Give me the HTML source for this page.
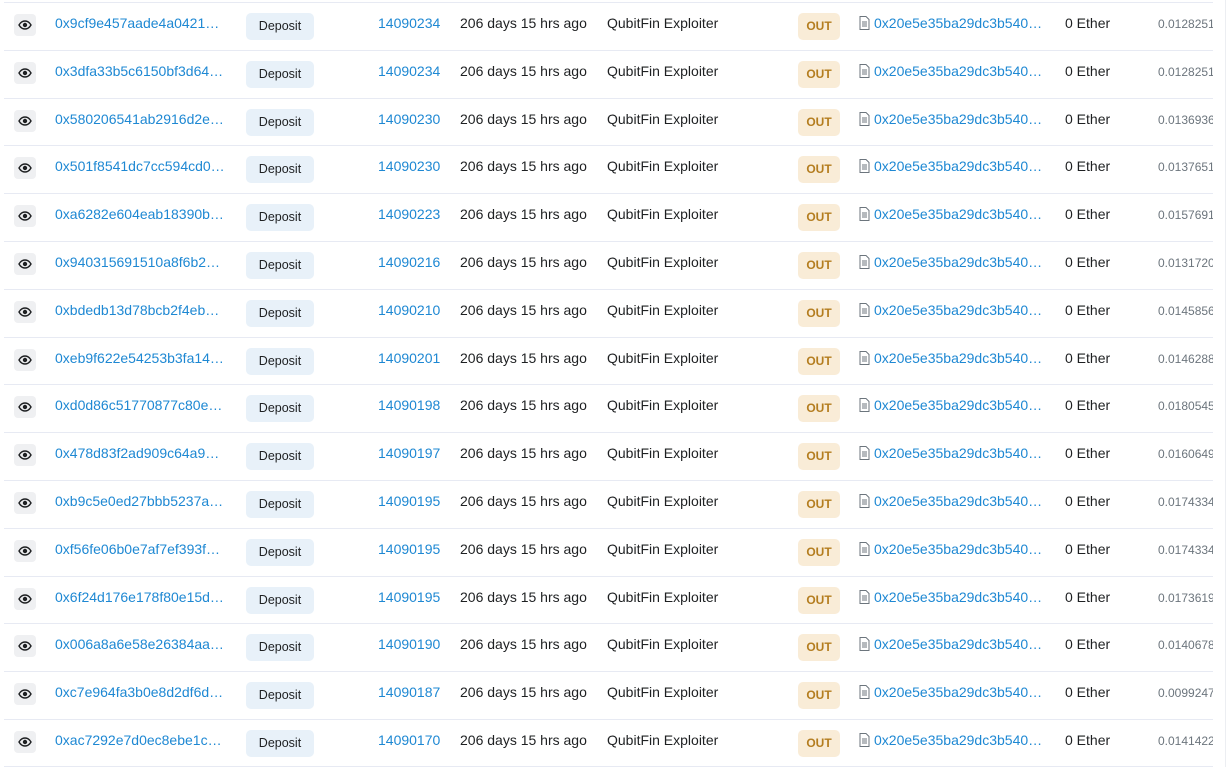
<!DOCTYPE html>
<html><head><meta charset="utf-8"><style>
*{margin:0;padding:0;box-sizing:border-box}
html,body{width:1227px;height:767px;overflow:hidden}
body{background:#fff;font-family:"Liberation Sans",Arial,sans-serif;font-size:14px;color:#1e2022;position:relative}
.r{position:absolute;left:4px;width:1209px;height:48px;border-top:1px solid #e7eaf3;overflow:hidden}
.r.end{height:1px}
.r>*{position:absolute;white-space:nowrap}
.eye{left:10px;top:11px;width:22px;height:22px;background:#eff0f2;border-radius:4px;display:flex;align-items:center;justify-content:center}
.h{left:51px;top:12px;color:#1e88d3}
.dep{left:242px;top:10px;width:68px;height:27px;background:#e8f1f9;border-radius:5px;font-size:12.5px;text-align:center;line-height:27px;color:#1e2022}
.b{left:374px;top:12px;color:#1e88d3}
.a{left:456px;top:12px}
.f{left:603px;top:12px}
.out{left:794px;top:10px;width:42px;height:27px;background:#f9ecd7;border-radius:5px;color:#b47d1f;font-weight:bold;font-size:12px;text-align:center;line-height:27px}
.doc{left:855px;top:13px}
.t{left:870px;top:12px;color:#1e88d3}
.e{left:1061px;top:12px}
.v{left:1154px;top:14px;font-size:12px;color:#6c757d}
.sb{position:absolute;left:1225px;top:0;width:1px;height:767px;background:#eceef2}
</style></head><body>
<div class="sb"></div>
<div class="r" style="top:2px"><div class="eye"><svg width="14" height="10" viewBox="0 0 14 10"><path d="M1 5C3 1.5 5 1 7 1s4 .5 6 4c-2 3.5-4 4-6 4S3 8.5 1 5z" fill="none" stroke="#1e2022" stroke-width="1.4"/><circle cx="7" cy="5" r="2.2" fill="#1e2022"/></svg></div><span class="h">0x9cf9e457aade4a0421…</span><div class="dep">Deposit</div><span class="b">14090234</span><span class="a">206 days 15 hrs ago</span><span class="f">QubitFin Exploiter</span><div class="out">OUT</div><span class="doc"><svg width="11" height="14" viewBox="0 0 11 14"><path d="M1 .5h6l3 3v10H1z" fill="none" stroke="#6c757d"/><path d="M3 6h5M3 8h5M3 10h5" stroke="#6c757d"/></svg></span><span class="t">0x20e5e35ba29dc3b540…</span><span class="e">0 Ether</span><span class="v">0.0128251</span></div>
<div class="r" style="top:50px"><div class="eye"><svg width="14" height="10" viewBox="0 0 14 10"><path d="M1 5C3 1.5 5 1 7 1s4 .5 6 4c-2 3.5-4 4-6 4S3 8.5 1 5z" fill="none" stroke="#1e2022" stroke-width="1.4"/><circle cx="7" cy="5" r="2.2" fill="#1e2022"/></svg></div><span class="h">0x3dfa33b5c6150bf3d64…</span><div class="dep">Deposit</div><span class="b">14090234</span><span class="a">206 days 15 hrs ago</span><span class="f">QubitFin Exploiter</span><div class="out">OUT</div><span class="doc"><svg width="11" height="14" viewBox="0 0 11 14"><path d="M1 .5h6l3 3v10H1z" fill="none" stroke="#6c757d"/><path d="M3 6h5M3 8h5M3 10h5" stroke="#6c757d"/></svg></span><span class="t">0x20e5e35ba29dc3b540…</span><span class="e">0 Ether</span><span class="v">0.0128251</span></div>
<div class="r" style="top:98px"><div class="eye"><svg width="14" height="10" viewBox="0 0 14 10"><path d="M1 5C3 1.5 5 1 7 1s4 .5 6 4c-2 3.5-4 4-6 4S3 8.5 1 5z" fill="none" stroke="#1e2022" stroke-width="1.4"/><circle cx="7" cy="5" r="2.2" fill="#1e2022"/></svg></div><span class="h">0x580206541ab2916d2e…</span><div class="dep">Deposit</div><span class="b">14090230</span><span class="a">206 days 15 hrs ago</span><span class="f">QubitFin Exploiter</span><div class="out">OUT</div><span class="doc"><svg width="11" height="14" viewBox="0 0 11 14"><path d="M1 .5h6l3 3v10H1z" fill="none" stroke="#6c757d"/><path d="M3 6h5M3 8h5M3 10h5" stroke="#6c757d"/></svg></span><span class="t">0x20e5e35ba29dc3b540…</span><span class="e">0 Ether</span><span class="v">0.0136936</span></div>
<div class="r" style="top:145px"><div class="eye"><svg width="14" height="10" viewBox="0 0 14 10"><path d="M1 5C3 1.5 5 1 7 1s4 .5 6 4c-2 3.5-4 4-6 4S3 8.5 1 5z" fill="none" stroke="#1e2022" stroke-width="1.4"/><circle cx="7" cy="5" r="2.2" fill="#1e2022"/></svg></div><span class="h">0x501f8541dc7cc594cd0…</span><div class="dep">Deposit</div><span class="b">14090230</span><span class="a">206 days 15 hrs ago</span><span class="f">QubitFin Exploiter</span><div class="out">OUT</div><span class="doc"><svg width="11" height="14" viewBox="0 0 11 14"><path d="M1 .5h6l3 3v10H1z" fill="none" stroke="#6c757d"/><path d="M3 6h5M3 8h5M3 10h5" stroke="#6c757d"/></svg></span><span class="t">0x20e5e35ba29dc3b540…</span><span class="e">0 Ether</span><span class="v">0.0137651</span></div>
<div class="r" style="top:193px"><div class="eye"><svg width="14" height="10" viewBox="0 0 14 10"><path d="M1 5C3 1.5 5 1 7 1s4 .5 6 4c-2 3.5-4 4-6 4S3 8.5 1 5z" fill="none" stroke="#1e2022" stroke-width="1.4"/><circle cx="7" cy="5" r="2.2" fill="#1e2022"/></svg></div><span class="h">0xa6282e604eab18390b…</span><div class="dep">Deposit</div><span class="b">14090223</span><span class="a">206 days 15 hrs ago</span><span class="f">QubitFin Exploiter</span><div class="out">OUT</div><span class="doc"><svg width="11" height="14" viewBox="0 0 11 14"><path d="M1 .5h6l3 3v10H1z" fill="none" stroke="#6c757d"/><path d="M3 6h5M3 8h5M3 10h5" stroke="#6c757d"/></svg></span><span class="t">0x20e5e35ba29dc3b540…</span><span class="e">0 Ether</span><span class="v">0.0157691</span></div>
<div class="r" style="top:241px"><div class="eye"><svg width="14" height="10" viewBox="0 0 14 10"><path d="M1 5C3 1.5 5 1 7 1s4 .5 6 4c-2 3.5-4 4-6 4S3 8.5 1 5z" fill="none" stroke="#1e2022" stroke-width="1.4"/><circle cx="7" cy="5" r="2.2" fill="#1e2022"/></svg></div><span class="h">0x940315691510a8f6b2…</span><div class="dep">Deposit</div><span class="b">14090216</span><span class="a">206 days 15 hrs ago</span><span class="f">QubitFin Exploiter</span><div class="out">OUT</div><span class="doc"><svg width="11" height="14" viewBox="0 0 11 14"><path d="M1 .5h6l3 3v10H1z" fill="none" stroke="#6c757d"/><path d="M3 6h5M3 8h5M3 10h5" stroke="#6c757d"/></svg></span><span class="t">0x20e5e35ba29dc3b540…</span><span class="e">0 Ether</span><span class="v">0.0131720</span></div>
<div class="r" style="top:289px"><div class="eye"><svg width="14" height="10" viewBox="0 0 14 10"><path d="M1 5C3 1.5 5 1 7 1s4 .5 6 4c-2 3.5-4 4-6 4S3 8.5 1 5z" fill="none" stroke="#1e2022" stroke-width="1.4"/><circle cx="7" cy="5" r="2.2" fill="#1e2022"/></svg></div><span class="h">0xbdedb13d78bcb2f4eb…</span><div class="dep">Deposit</div><span class="b">14090210</span><span class="a">206 days 15 hrs ago</span><span class="f">QubitFin Exploiter</span><div class="out">OUT</div><span class="doc"><svg width="11" height="14" viewBox="0 0 11 14"><path d="M1 .5h6l3 3v10H1z" fill="none" stroke="#6c757d"/><path d="M3 6h5M3 8h5M3 10h5" stroke="#6c757d"/></svg></span><span class="t">0x20e5e35ba29dc3b540…</span><span class="e">0 Ether</span><span class="v">0.0145856</span></div>
<div class="r" style="top:337px"><div class="eye"><svg width="14" height="10" viewBox="0 0 14 10"><path d="M1 5C3 1.5 5 1 7 1s4 .5 6 4c-2 3.5-4 4-6 4S3 8.5 1 5z" fill="none" stroke="#1e2022" stroke-width="1.4"/><circle cx="7" cy="5" r="2.2" fill="#1e2022"/></svg></div><span class="h">0xeb9f622e54253b3fa14…</span><div class="dep">Deposit</div><span class="b">14090201</span><span class="a">206 days 15 hrs ago</span><span class="f">QubitFin Exploiter</span><div class="out">OUT</div><span class="doc"><svg width="11" height="14" viewBox="0 0 11 14"><path d="M1 .5h6l3 3v10H1z" fill="none" stroke="#6c757d"/><path d="M3 6h5M3 8h5M3 10h5" stroke="#6c757d"/></svg></span><span class="t">0x20e5e35ba29dc3b540…</span><span class="e">0 Ether</span><span class="v">0.0146288</span></div>
<div class="r" style="top:384px"><div class="eye"><svg width="14" height="10" viewBox="0 0 14 10"><path d="M1 5C3 1.5 5 1 7 1s4 .5 6 4c-2 3.5-4 4-6 4S3 8.5 1 5z" fill="none" stroke="#1e2022" stroke-width="1.4"/><circle cx="7" cy="5" r="2.2" fill="#1e2022"/></svg></div><span class="h">0xd0d86c51770877c80e…</span><div class="dep">Deposit</div><span class="b">14090198</span><span class="a">206 days 15 hrs ago</span><span class="f">QubitFin Exploiter</span><div class="out">OUT</div><span class="doc"><svg width="11" height="14" viewBox="0 0 11 14"><path d="M1 .5h6l3 3v10H1z" fill="none" stroke="#6c757d"/><path d="M3 6h5M3 8h5M3 10h5" stroke="#6c757d"/></svg></span><span class="t">0x20e5e35ba29dc3b540…</span><span class="e">0 Ether</span><span class="v">0.0180545</span></div>
<div class="r" style="top:432px"><div class="eye"><svg width="14" height="10" viewBox="0 0 14 10"><path d="M1 5C3 1.5 5 1 7 1s4 .5 6 4c-2 3.5-4 4-6 4S3 8.5 1 5z" fill="none" stroke="#1e2022" stroke-width="1.4"/><circle cx="7" cy="5" r="2.2" fill="#1e2022"/></svg></div><span class="h">0x478d83f2ad909c64a9…</span><div class="dep">Deposit</div><span class="b">14090197</span><span class="a">206 days 15 hrs ago</span><span class="f">QubitFin Exploiter</span><div class="out">OUT</div><span class="doc"><svg width="11" height="14" viewBox="0 0 11 14"><path d="M1 .5h6l3 3v10H1z" fill="none" stroke="#6c757d"/><path d="M3 6h5M3 8h5M3 10h5" stroke="#6c757d"/></svg></span><span class="t">0x20e5e35ba29dc3b540…</span><span class="e">0 Ether</span><span class="v">0.0160649</span></div>
<div class="r" style="top:480px"><div class="eye"><svg width="14" height="10" viewBox="0 0 14 10"><path d="M1 5C3 1.5 5 1 7 1s4 .5 6 4c-2 3.5-4 4-6 4S3 8.5 1 5z" fill="none" stroke="#1e2022" stroke-width="1.4"/><circle cx="7" cy="5" r="2.2" fill="#1e2022"/></svg></div><span class="h">0xb9c5e0ed27bbb5237a…</span><div class="dep">Deposit</div><span class="b">14090195</span><span class="a">206 days 15 hrs ago</span><span class="f">QubitFin Exploiter</span><div class="out">OUT</div><span class="doc"><svg width="11" height="14" viewBox="0 0 11 14"><path d="M1 .5h6l3 3v10H1z" fill="none" stroke="#6c757d"/><path d="M3 6h5M3 8h5M3 10h5" stroke="#6c757d"/></svg></span><span class="t">0x20e5e35ba29dc3b540…</span><span class="e">0 Ether</span><span class="v">0.0174334</span></div>
<div class="r" style="top:528px"><div class="eye"><svg width="14" height="10" viewBox="0 0 14 10"><path d="M1 5C3 1.5 5 1 7 1s4 .5 6 4c-2 3.5-4 4-6 4S3 8.5 1 5z" fill="none" stroke="#1e2022" stroke-width="1.4"/><circle cx="7" cy="5" r="2.2" fill="#1e2022"/></svg></div><span class="h">0xf56fe06b0e7af7ef393f…</span><div class="dep">Deposit</div><span class="b">14090195</span><span class="a">206 days 15 hrs ago</span><span class="f">QubitFin Exploiter</span><div class="out">OUT</div><span class="doc"><svg width="11" height="14" viewBox="0 0 11 14"><path d="M1 .5h6l3 3v10H1z" fill="none" stroke="#6c757d"/><path d="M3 6h5M3 8h5M3 10h5" stroke="#6c757d"/></svg></span><span class="t">0x20e5e35ba29dc3b540…</span><span class="e">0 Ether</span><span class="v">0.0174334</span></div>
<div class="r" style="top:576px"><div class="eye"><svg width="14" height="10" viewBox="0 0 14 10"><path d="M1 5C3 1.5 5 1 7 1s4 .5 6 4c-2 3.5-4 4-6 4S3 8.5 1 5z" fill="none" stroke="#1e2022" stroke-width="1.4"/><circle cx="7" cy="5" r="2.2" fill="#1e2022"/></svg></div><span class="h">0x6f24d176e178f80e15d…</span><div class="dep">Deposit</div><span class="b">14090195</span><span class="a">206 days 15 hrs ago</span><span class="f">QubitFin Exploiter</span><div class="out">OUT</div><span class="doc"><svg width="11" height="14" viewBox="0 0 11 14"><path d="M1 .5h6l3 3v10H1z" fill="none" stroke="#6c757d"/><path d="M3 6h5M3 8h5M3 10h5" stroke="#6c757d"/></svg></span><span class="t">0x20e5e35ba29dc3b540…</span><span class="e">0 Ether</span><span class="v">0.0173619</span></div>
<div class="r" style="top:623px"><div class="eye"><svg width="14" height="10" viewBox="0 0 14 10"><path d="M1 5C3 1.5 5 1 7 1s4 .5 6 4c-2 3.5-4 4-6 4S3 8.5 1 5z" fill="none" stroke="#1e2022" stroke-width="1.4"/><circle cx="7" cy="5" r="2.2" fill="#1e2022"/></svg></div><span class="h">0x006a8a6e58e26384aa…</span><div class="dep">Deposit</div><span class="b">14090190</span><span class="a">206 days 15 hrs ago</span><span class="f">QubitFin Exploiter</span><div class="out">OUT</div><span class="doc"><svg width="11" height="14" viewBox="0 0 11 14"><path d="M1 .5h6l3 3v10H1z" fill="none" stroke="#6c757d"/><path d="M3 6h5M3 8h5M3 10h5" stroke="#6c757d"/></svg></span><span class="t">0x20e5e35ba29dc3b540…</span><span class="e">0 Ether</span><span class="v">0.0140678</span></div>
<div class="r" style="top:671px"><div class="eye"><svg width="14" height="10" viewBox="0 0 14 10"><path d="M1 5C3 1.5 5 1 7 1s4 .5 6 4c-2 3.5-4 4-6 4S3 8.5 1 5z" fill="none" stroke="#1e2022" stroke-width="1.4"/><circle cx="7" cy="5" r="2.2" fill="#1e2022"/></svg></div><span class="h">0xc7e964fa3b0e8d2df6d…</span><div class="dep">Deposit</div><span class="b">14090187</span><span class="a">206 days 15 hrs ago</span><span class="f">QubitFin Exploiter</span><div class="out">OUT</div><span class="doc"><svg width="11" height="14" viewBox="0 0 11 14"><path d="M1 .5h6l3 3v10H1z" fill="none" stroke="#6c757d"/><path d="M3 6h5M3 8h5M3 10h5" stroke="#6c757d"/></svg></span><span class="t">0x20e5e35ba29dc3b540…</span><span class="e">0 Ether</span><span class="v">0.0099247</span></div>
<div class="r" style="top:719px;height:47px"><div class="eye"><svg width="14" height="10" viewBox="0 0 14 10"><path d="M1 5C3 1.5 5 1 7 1s4 .5 6 4c-2 3.5-4 4-6 4S3 8.5 1 5z" fill="none" stroke="#1e2022" stroke-width="1.4"/><circle cx="7" cy="5" r="2.2" fill="#1e2022"/></svg></div><span class="h">0xac7292e7d0ec8ebe1c…</span><div class="dep">Deposit</div><span class="b">14090170</span><span class="a">206 days 15 hrs ago</span><span class="f">QubitFin Exploiter</span><div class="out">OUT</div><span class="doc"><svg width="11" height="14" viewBox="0 0 11 14"><path d="M1 .5h6l3 3v10H1z" fill="none" stroke="#6c757d"/><path d="M3 6h5M3 8h5M3 10h5" stroke="#6c757d"/></svg></span><span class="t">0x20e5e35ba29dc3b540…</span><span class="e">0 Ether</span><span class="v">0.0141422</span></div>
<div class="r end" style="top:766px"></div>
</body></html>
